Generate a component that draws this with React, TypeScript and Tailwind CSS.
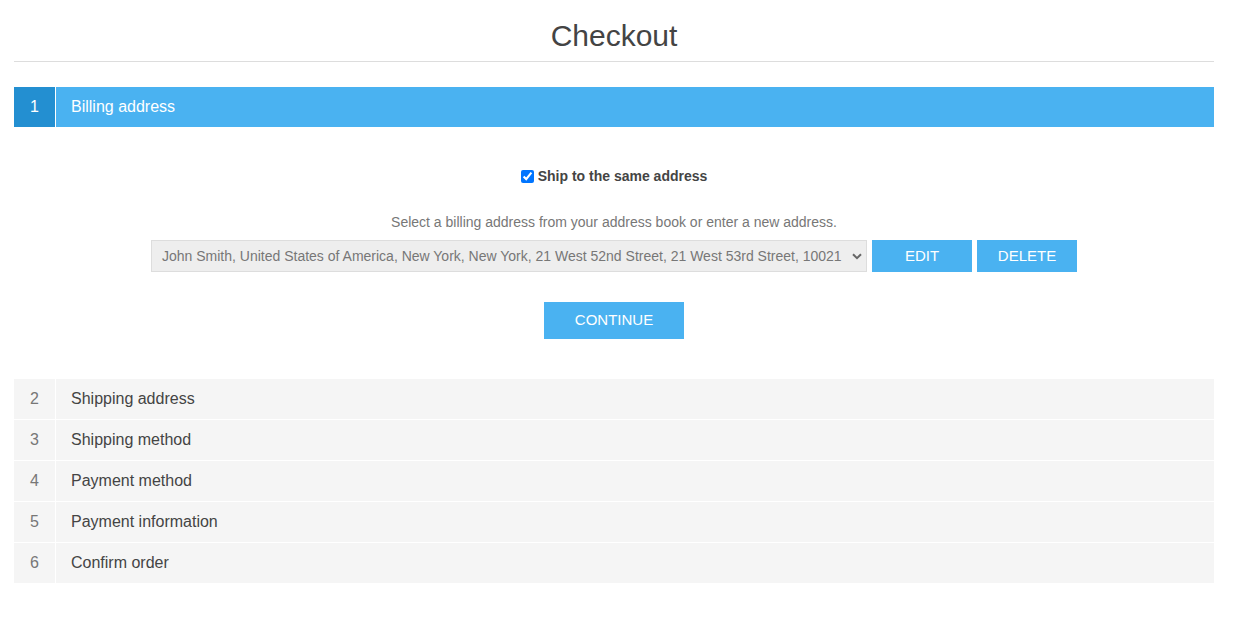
import React from 'react';

const steps = [
    { n: 2, label: 'Shipping address' },
    { n: 3, label: 'Shipping method' },
    { n: 4, label: 'Payment method' },
    { n: 5, label: 'Payment information' },
    { n: 6, label: 'Confirm order' },
];

const Chevron = () => (
    <svg width="10" height="7" viewBox="0 0 10 7" className="shrink-0">
        <path d="M1 1.2 L5 5.2 L9 1.2" fill="none" stroke="#666" strokeWidth="2" />
    </svg>
);

export default function App() {
    return (
        <div className="min-h-screen bg-white px-[14px] pt-[18px] font-['Liberation_Sans',Arial,sans-serif]">
            <div className="w-[1200px]">
                {/* Title */}
                <h1 className="text-center text-[30px] leading-[36px] text-[#444] pb-[7px] border-b border-[#ddd]">
                    Checkout
                </h1>

                {/* Step 1 - active */}
                <div className="mt-[25px] flex h-[40px] bg-[#4ab2f1] text-white text-[16px]">
                    <div className="w-[42px] flex items-center justify-center bg-[#238fd1] border-r border-white">1</div>
                    <div className="flex items-center pl-[15px]">Billing address</div>
                </div>

                <div className="flex flex-col items-center pt-[41px] pb-[40px]">
                    <label className="flex items-center gap-[4px] text-[14px] font-bold text-[#444] h-[16px]">
                        <input type="checkbox" defaultChecked className="w-[13px] h-[13px] accent-[#0075ff]" />
                        Ship to the same address
                    </label>

                    <div className="mt-[30px] text-[14px] text-[#777] leading-[16px]">
                        Select a billing address from your address book or enter a new address.
                    </div>

                    <div className="mt-[10px] flex gap-[5px]">
                        <div className="w-[716px] h-[32px] flex items-center justify-between bg-[#eee] border border-[#ddd] pl-[10px] pr-[4px] text-[14px] text-[#777]">
                            <span className="whitespace-nowrap">
                                John Smith, United States of America, New York, New York, 21 West 52nd Street, 21 West 53rd Street, 10021
                            </span>
                            <Chevron />
                        </div>
                        <button className="w-[100px] h-[32px] bg-[#4ab2f1] text-white text-[15px] uppercase">Edit</button>
                        <button className="w-[100px] h-[32px] bg-[#4ab2f1] text-white text-[15px] uppercase">Delete</button>
                    </div>

                    <button className="mt-[30px] w-[140px] h-[37px] bg-[#4ab2f1] text-white text-[15px] uppercase">
                        Continue
                    </button>
                </div>

                {/* Remaining steps */}
                <div className="flex flex-col gap-[1px]">
                    {steps.map((s) => (
                        <div key={s.n} className="flex h-[40px] bg-[#f5f5f5] text-[16px]">
                            <div className="w-[42px] flex items-center justify-center text-[#777] border-r border-white">{s.n}</div>
                            <div className="flex items-center pl-[15px] text-[#444]">{s.label}</div>
                        </div>
                    ))}
                </div>
            </div>
        </div>
    );
}
